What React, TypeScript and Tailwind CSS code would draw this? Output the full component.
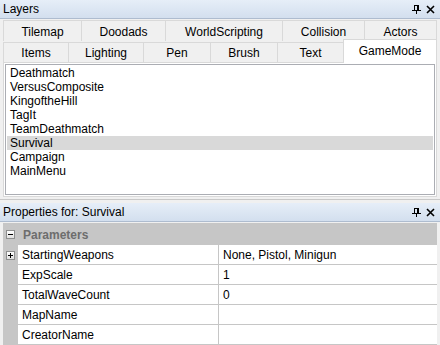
import React from 'react';

const FONT = { fontFamily: '"Segoe UI", "Liberation Sans", Arial, sans-serif' };

const ROW1 = [
  { label: 'Tilemap', w: 'w-[78px]' },
  { label: 'Doodads', w: 'w-[84px]' },
  { label: 'WorldScripting', w: 'w-[117px]' },
  { label: 'Collision', w: 'w-[82px]' },
  { label: 'Actors', w: 'w-[73px]' },
];

const ROW2 = [
  { label: 'Items', w: 'w-[65px]' },
  { label: 'Lighting', w: 'w-[75px]' },
  { label: 'Pen', w: 'w-[67px]' },
  { label: 'Brush', w: 'w-[67px]' },
  { label: 'Text', w: 'w-[66px]' },
];

const MODES = ['Deathmatch', 'VersusComposite', 'KingoftheHill', 'TagIt', 'TeamDeathmatch', 'Survival', 'Campaign', 'MainMenu'];

const PROPS = [
  { name: 'StartingWeapons', value: 'None, Pistol, Minigun', expand: true },
  { name: 'ExpScale', value: '1' },
  { name: 'TotalWaveCount', value: '0' },
  { name: 'MapName', value: '' },
  { name: 'CreatorName', value: '' },
];

function PinClose() {
  return (
    <div className="flex items-center gap-[5px] pr-[5px]">
      <svg width="9" height="10" viewBox="0 0 9 10">
        <path d="M2 1h5M2 1v5M5 1v5M6 1v5M0 6h9M4.5 6v4" stroke="#000" strokeWidth="1" fill="none" shapeRendering="crispEdges" />
      </svg>
      <svg width="9" height="9" viewBox="0 0 9 9">
        <path d="M1 1l7 7M8 1l-7 7" stroke="#000" strokeWidth="1.6" fill="none" />
      </svg>
    </div>
  );
}

function TitleBar({ title }: { title: string }) {
  return (
    <div className="flex h-[19px] items-center justify-between border-b border-[#aebccf] bg-gradient-to-b from-[#e6eef8] to-[#d3dfee] pl-[3px] text-[12px] text-black">
      <span>{title}</span>
      <PinClose />
    </div>
  );
}

function ExpandBox({ sign }: { sign: '+' | '-' }) {
  return (
    <div className="flex h-[9px] w-[9px] items-center justify-center border border-[#8e8f8f] bg-gradient-to-b from-white to-[#e0e0e0]">
      <svg width="7" height="7" viewBox="0 0 7 7">
        <path d={sign === '+' ? 'M1 3.5h5M3.5 1v5' : 'M1 3.5h5'} stroke="#000" strokeWidth="1" shapeRendering="crispEdges" />
      </svg>
    </div>
  );
}

export default function App(): JSX.Element {
  return (
    <div className="flex h-[345px] w-[440px] flex-col overflow-hidden bg-[#f0f0f0]" style={FONT}>
      {/* Layers panel */}
      <TitleBar title="Layers" />
      <div className="flex flex-col px-[3px] pt-[1px]">
        <div className="flex h-[21px]">
          {ROW1.map((t) => (
            <div
              key={t.label}
              className={`flex ${t.w} items-center justify-center border-t border-l border-[#d9d9d9] bg-[#f0f0f0] pt-[1px] text-[12px] text-black last:border-r`}
            >
              {t.label}
            </div>
          ))}
        </div>
        <div className="flex h-[21px] items-end">
          {ROW2.map((t) => (
            <div
              key={t.label}
              className={`flex h-[20px] ${t.w} items-center justify-center border-t border-l border-[#d9d9d9] bg-[#f0f0f0] pt-[1px] text-[12px] text-black`}
            >
              {t.label}
            </div>
          ))}
          <div className="relative z-10 -mb-px flex h-[24px] flex-1 items-center justify-center border-x border-t border-[#d9d9d9] bg-white pb-[2px] text-[12px] text-black">
            GameMode
          </div>
        </div>
        <div className="h-[135px] border border-[#d9d9d9] bg-white p-px">
          <div className="h-[131px] border border-[#abadb3] bg-white px-px pt-px">
            {MODES.map((m) => (
              <div
                key={m}
                className={`h-[14px] pl-[3px] text-[12px] leading-[14px] text-black ${m === 'Survival' ? 'bg-[#d9d9d9]' : ''}`}
              >
                {m}
              </div>
            ))}
          </div>
        </div>
      </div>

      {/* splitter */}
      <div className="mt-[2px] h-[4px] border-t border-[#c8c8c8] bg-[#f0f0f0]" />

      {/* Properties panel */}
      <TitleBar title="Properties for: Survival" />
      <div className="flex flex-1 flex-col px-[3px] pt-[1px]">
        <div className="flex flex-1 flex-col border-t border-[#c6c6c6] bg-[#c6c6c6]">
          <div className="flex h-[21px] items-center">
            <div className="flex w-[15px] justify-center">
              <ExpandBox sign="-" />
            </div>
            <span className="pl-[5px] text-[12px] font-bold text-[#6d6d6d]">Parameters</span>
          </div>
          {PROPS.map((p) => (
            <div key={p.name} className="flex h-[20px]">
              <div className="flex w-[15px] items-center justify-center">{p.expand && <ExpandBox sign="+" />}</div>
              <div className="flex w-[200px] items-center border-b border-[#c6c6c6] bg-white pl-[4px] text-[12px] text-black">
                {p.name}
              </div>
              <div className="flex flex-1 items-center border-b border-l border-[#c6c6c6] bg-white pl-[4px] text-[12px] text-black">
                {p.value}
              </div>
            </div>
          ))}
          <div className="flex flex-1">
            <div className="w-[15px]" />
            <div className="flex-1 bg-white" />
          </div>
        </div>
      </div>
    </div>
  );
}
